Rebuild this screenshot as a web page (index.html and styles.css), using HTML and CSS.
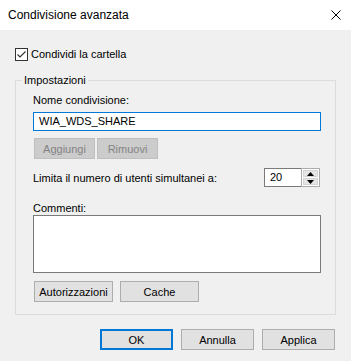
FILE: index.html
```html
<!DOCTYPE html>
<html lang="it">
<head>
  <meta charset="UTF-8" />
  <title>Condivisione avanzata</title>
  <link rel="stylesheet" href="styles.css">
</head>
<body>
  <div class="titlebar">
    <span class="title">Condivisione avanzata</span>
    <svg class="close" width="10" height="10" viewBox="0 0 10 10">
      <path d="M0.5 0.5 L9.5 9.5 M9.5 0.5 L0.5 9.5" stroke="#000" stroke-width="1" fill="none" />
    </svg>
  </div>

  <div class="content">
    <label class="check-row">
      <span class="checkbox">
        <svg width="11" height="11" viewBox="0 0 11 11">
          <path d="M1.5 5.5 L4 8 L9.5 2.5" stroke="#333" stroke-width="1.2" fill="none" />
        </svg>
      </span>
      Condividi la cartella
    </label>

    <fieldset class="group">
      <legend>Impostazioni</legend>
      <div class="group-body">
        <div class="field-label">Nome condivisione:</div>
        <div class="text-input">WIA_WDS_SHARE</div>

        <div class="btn-row tight">
          <button class="btn disabled">Aggiungi</button>
          <button class="btn disabled">Rimuovi</button>
        </div>

        <div class="limit-row">
          <span>Limita il numero di utenti simultanei a:</span>
          <div class="spin">
            <span class="spin-value">20</span>
            <div class="spin-buttons">
              <div class="spin-btn">
                <svg width="7" height="4" viewBox="0 0 7 4"><path d="M3.5 0 L7 4 L0 4 Z" fill="#000" /></svg>
              </div>
              <div class="spin-btn">
                <svg width="7" height="4" viewBox="0 0 7 4"><path d="M0 0 L7 0 L3.5 4 Z" fill="#000" /></svg>
              </div>
            </div>
          </div>
        </div>

        <div class="field-label comments-label">Commenti:</div>
        <div class="textarea"></div>

        <div class="btn-row wide">
          <button class="btn big">Autorizzazioni</button>
          <button class="btn big">Cache</button>
        </div>
      </div>
    </fieldset>

    <div class="dialog-buttons">
      <button class="btn dlg default">OK</button>
      <button class="btn dlg">Annulla</button>
      <button class="btn dlg">Applica</button>
    </div>
  </div>
</body>
</html>
```

FILE: styles.css
```css
body {
  margin: 0;
  width: 351px;
  height: 361px;
  background: #f0f0f0;
  font-family: 'Liberation Sans', Arial, sans-serif;
  font-size: 11px;
  color: #000;
  overflow: hidden;
}

.titlebar {
  height: 30px;
  background: #fff;
  display: flex;
  align-items: center;
  justify-content: space-between;
  padding: 0 10px 0 8px;
}

.title {
  font-size: 12px;
  line-height: 15px;
}

.content {
  padding: 17px 15px 0 15px;
}

.check-row {
  display: flex;
  align-items: center;
  gap: 3px;
  line-height: 15px;
}

.checkbox {
  width: 11px;
  height: 11px;
  border: 1px solid #333;
  background: #fff;
  display: flex;
}

.group {
  margin: 11px 0 0 0;
  padding: 0;
  border: 1px solid #dcdcdc;
  min-width: 0;
}

.group legend {
  margin-left: 6px;
  padding: 0 2px;
  line-height: 15px;
}

.group-body {
  padding: 5px 14px 12px 17px;
}

.field-label {
  line-height: 15px;
}

.text-input {
  margin-top: 4px;
  height: 17px;
  border: 1px solid #0078d7;
  background: #fff;
  line-height: 17px;
  padding-left: 5px;
}

.btn {
  font-family: inherit;
  font-size: 11px;
  color: #000;
  background: #e1e1e1;
  border: 1px solid #adadad;
  height: 21px;
  padding: 0;
  margin: 0;
}

.btn.disabled {
  background: #cccccc;
  border-color: #bfbfbf;
  color: #838383;
}

.btn-row {
  display: flex;
  margin-left: 1px;
}

.btn-row.tight {
  margin-top: 7px;
  gap: 2px;
}

.btn-row.tight .btn {
  width: 61px;
}

.btn-row.wide {
  margin-top: 8px;
  gap: 7px;
}

.btn.big {
  width: 79px;
}

.limit-row {
  margin-top: 9px;
  display: flex;
  align-items: center;
  justify-content: space-between;
  padding-right: 1px;
}

.spin {
  width: 56px;
  height: 19px;
  display: flex;
}

.spin-value {
  flex: 1;
  border: 1px solid #7a7a7a;
  border-right: none;
  background: #fff;
  line-height: 17px;
  padding-left: 5px;
}

.spin-buttons {
  width: 15px;
  display: flex;
  flex-direction: column;
  gap: 1px;
  padding: 1px;
  background: #fff;
  border: 1px solid #acacac;
}

.spin-btn {
  flex: 1;
  background: #e5e5e5;
  border: 1px solid #d4d4d4;
  display: flex;
  align-items: center;
  justify-content: center;
}

.comments-label {
  margin-top: 14px;
  line-height: 14px;
}

.textarea {
  height: 56px;
  border: 1px solid #7a7a7a;
  background: #fff;
}

.dialog-buttons {
  margin-top: 14px;
  display: flex;
  justify-content: flex-end;
  gap: 8px;
  padding-right: 1px;
}

.btn.dlg {
  width: 73px;
}

.btn.default {
  border: 2px solid #0078d7;
}
```
